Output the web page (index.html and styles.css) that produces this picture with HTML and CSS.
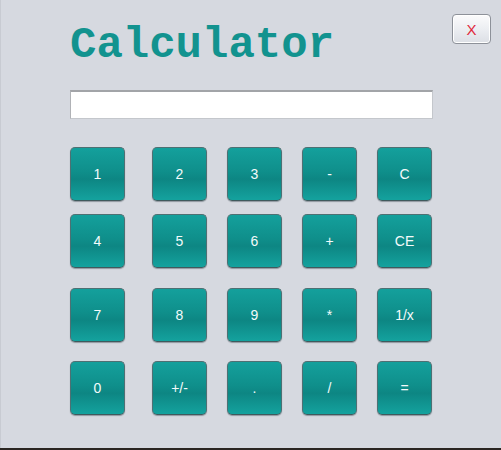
FILE: index.html
```html
<!DOCTYPE html>
<html>
<head>
<meta charset="utf-8">
<link rel="stylesheet" href="styles.css">
</head>
<body>
<div class="window">
  <div class="header">
    <h1 class="title">Calculator</h1>
    <button class="close">X</button>
  </div>
  <div class="display"></div>
  <div class="keys">
    <button class="key">1</button>
    <button class="key">2</button>
    <button class="key">3</button>
    <button class="key">-</button>
    <button class="key">C</button>
    <button class="key">4</button>
    <button class="key">5</button>
    <button class="key">6</button>
    <button class="key">+</button>
    <button class="key">CE</button>
    <button class="key">7</button>
    <button class="key">8</button>
    <button class="key">9</button>
    <button class="key">*</button>
    <button class="key">1/x</button>
    <button class="key">0</button>
    <button class="key">+/-</button>
    <button class="key">.</button>
    <button class="key">/</button>
    <button class="key">=</button>
  </div>
</div>
</body>
</html>
```
FILE: styles.css
```css
html, body {
  margin: 0;
  padding: 0;
  background: #2b2622;
}
.window {
  height: 448px;
  background: #d6d9e0;
  border-left: 1px solid #c8cbd2;
  box-sizing: border-box;
  font-family: "Liberation Sans", Arial, sans-serif;
}
.header {
  display: flex;
  justify-content: space-between;
  align-items: flex-start;
  padding: 0 10px 0 69px;
}
.title {
  margin: 23px 0 0 0;
  font-family: "Courier New", "Nimbus Mono PS", "Nimbus Mono L", FreeMono, "Liberation Mono", monospace;
  font-weight: bold;
  font-size: 44px;
  line-height: 44px;
  color: #12938f;
}
.close {
  margin-top: 14px;
  width: 39px;
  height: 30px;
  padding: 0;
  border: 1px solid #8d9199;
  border-radius: 4px;
  background: linear-gradient(#fbfbfc, #eceef2 50%, #dcdfe5);
  box-shadow: inset 0 0 0 1px #ffffff;
  color: #e0283c;
  font-family: "Liberation Sans", Arial, sans-serif;
  font-size: 15px;
}
.display {
  margin: 23px 0 0 69px;
  width: 363px;
  height: 29px;
  box-sizing: border-box;
  background: #ffffff;
  border: 1px solid #c4c7cc;
  border-top: 2px solid #a2a4a8;
  border-left: 1px solid #b0b2b6;
}
.keys {
  margin: 28px 0 0 69px;
  display: grid;
  grid-template-columns: 82px 75px 75px 75px 55px;
  grid-template-rows: 67px 74px 73px 54px;
  justify-items: start;
  align-items: start;
}
.key {
  width: 55px;
  height: 54px;
  padding: 0;
  box-sizing: border-box;
  border: 1px solid #4e7073;
  border-bottom-color: #3f5a5d;
  border-radius: 5px;
  background: linear-gradient(#14a09c, #0f8f8b 45%, #0d8683 60%, #14a29e);
  box-shadow: 0 1px 1px rgba(60, 70, 80, 0.45);
  color: #f4fbfb;
  font-family: "Liberation Sans", Arial, sans-serif;
  font-size: 14px;
}
```
